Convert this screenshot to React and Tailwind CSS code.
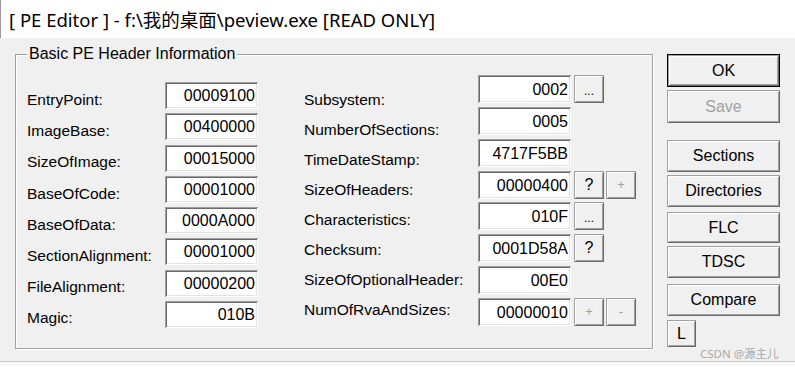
import React from 'react';

const sunken =
  'bg-white shadow-[inset_1px_1px_0_#a0a0a0,inset_-1px_-1px_0_#ffffff,inset_2px_2px_0_#696969,inset_-2px_-2px_0_#e3e3e3]';
const raised =
  'bg-[#f0f0f0] shadow-[inset_1px_1px_0_#a0a0a0,inset_-1px_-1px_0_#696969,inset_2px_2px_0_#ffffff,inset_-2px_-2px_0_#a0a0a0]';

const leftRows = [
  ['EntryPoint:', '00009100'],
  ['ImageBase:', '00400000'],
  ['SizeOfImage:', '00015000'],
  ['BaseOfCode:', '00001000'],
  ['BaseOfData:', '0000A000'],
  ['SectionAlignment:', '00001000'],
  ['FileAlignment:', '00000200'],
  ['Magic:', '010B'],
];

const rightRows = [
  ['Subsystem:', '0002', [{ t: '...' }]],
  ['NumberOfSections:', '0005', []],
  ['TimeDateStamp:', '4717F5BB', []],
  ['SizeOfHeaders:', '00000400', [{ t: '?' }, { t: '+', off: true }]],
  ['Characteristics:', '010F', [{ t: '...' }]],
  ['Checksum:', '0001D58A', [{ t: '?' }]],
  ['SizeOfOptionalHeader:', '00E0', []],
  ['NumOfRvaAndSizes:', '00000010', [{ t: '+', off: true }, { t: '-', off: true }]],
];

const SmallButton = ({ t, off }) => (
  <div
    className={`${raised} w-[30px] h-full flex items-center justify-center ${
      t === '...' ? 'text-[12px] pt-[4px]' : off ? 'text-[13px]' : 'text-[16px]'
    } ${off ? 'text-[#a0a0a0]' : 'text-black'}`}
  >
    {t}
  </div>
);

const SideButton = ({ children, className = '', off }) => (
  <div
    className={`${raised} w-[113px] flex items-center justify-center text-[16px] ${
      off ? 'text-[#a0a0a0]' : 'text-black'
    } ${className}`}
  >
    {children}
  </div>
);

export default function App() {
  return (
    <div
      className="w-[795px] h-[367px] bg-white overflow-hidden text-black"
      style={{ fontFamily: '"Liberation Sans", Arial, sans-serif' }}
    >
      <div
        className="h-[38px] bg-white flex items-center pl-[8px] pt-[2px] text-[18.5px] border-l border-[#9a9a9a]"
        style={{ fontFamily: '"Noto Sans", "Noto Sans CJK SC", sans-serif' }}
      >
        [ PE Editor ] - f:\我的桌面\peview.exe [READ ONLY]
      </div>

      <div className="relative h-[324px] bg-[#f0f0f0] border-b border-[#c8c8c8] flex pl-[15px] pt-[16px]">
        <div className="relative w-[638px] h-[295px] border border-[#a0a0a0] shadow-[inset_1px_1px_0_#ffffff,1px_1px_0_#ffffff]">
          <span className="absolute left-[11px] -top-[11px] bg-[#f0f0f0] px-[2px] text-[16px] leading-[20px]">
            Basic PE Header Information
          </span>

          <div className="flex pl-[11px]">
            <div className="w-[138px] mt-[29px] flex flex-col text-[15.5px]">
              {leftRows.map(([label]) => (
                <div key={label} className="h-[31.2px] leading-[31.2px] whitespace-nowrap">
                  {label}
                </div>
              ))}
            </div>

            <div className="w-[93px] mt-[27px] flex flex-col gap-[4.3px]">
              {leftRows.map(([label, value]) => (
                <div
                  key={label}
                  className={`${sunken} h-[27px] flex items-center justify-end pr-[3px] pt-[1px] text-[16px]`}
                >
                  {value}
                </div>
              ))}
            </div>

            <div className="w-[174px] ml-[46px] mt-[29.5px] flex flex-col text-[15.5px]">
              {rightRows.map(([label]) => (
                <div key={label} className="h-[30px] leading-[30px] whitespace-nowrap">
                  {label}
                </div>
              ))}
            </div>

            <div className="mt-[20px] flex flex-col gap-[3.85px]">
              {rightRows.map(([label, value, extras]) => (
                <div key={label} className="h-[28px] flex gap-[2px]">
                  <div
                    className={`${sunken} w-[93px] h-full flex items-center justify-end pr-[3px] pt-[2px] text-[16px] mr-[1px]`}
                  >
                    {value}
                  </div>
                  {extras.map((b, i) => (
                    <SmallButton key={i} {...b} />
                  ))}
                </div>
              ))}
            </div>
          </div>
        </div>

        <div className="ml-[14px] flex flex-col">
          <SideButton className="h-[33px] border border-black">OK</SideButton>
          <SideButton className="h-[33px] mt-[3px]" off>
            Save
          </SideButton>
          <SideButton className="h-[32px] mt-[17px]">Sections</SideButton>
          <SideButton className="h-[32px] mt-[3px]">Directories</SideButton>
          <SideButton className="h-[31px] mt-[5px]">FLC</SideButton>
          <SideButton className="h-[32px] mt-[3px]">TDSC</SideButton>
          <SideButton className="h-[32px] mt-[6px]">Compare</SideButton>
          <div className={`${raised} w-[29px] h-[27px] mt-[4px] flex items-center justify-center text-[16px]`}>
            L
          </div>
        </div>

        <span
          className="absolute left-[700px] top-[307px] text-[11.5px] text-[#a8a8a8] whitespace-nowrap"
          style={{ fontFamily: '"Noto Sans", "Noto Sans CJK SC", sans-serif' }}
        >
          CSDN @源主儿
        </span>
      </div>
      <div className="h-[4px] bg-[#f8f8f8]" />
    </div>
  );
}
